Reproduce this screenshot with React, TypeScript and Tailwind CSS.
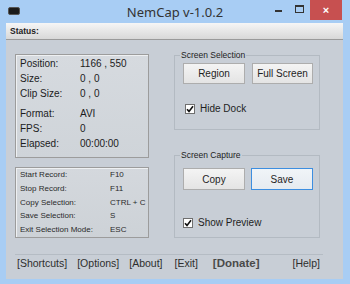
import React from "react";

const shortcuts: [string, string][] = [
  ["Start Record:", "F10"],
  ["Stop Record:", "F11"],
  ["Copy Selection:", "CTRL + C"],
  ["Save Selection:", "S"],
  ["Exit Selection Mode:", "ESC"],
];

function Check({ label }: { label: string }) {
  return (
    <div className="flex items-center gap-[5px]">
      <span className="w-[10px] h-[10px] bg-white border border-[#6f6f6f] flex items-center justify-center">
        <svg width="8" height="8" viewBox="0 0 8 8">
          <path d="M1 4.2 L3 6.4 L7 1.2" fill="none" stroke="#111" strokeWidth="1.6" />
        </svg>
      </span>
      <span className="text-[10px] leading-[12px] text-[#1e1e1e]">{label}</span>
    </div>
  );
}

function Btn({ children, w, h, active }: { children: React.ReactNode; w: string; h: string; active?: boolean }) {
  return (
    <button
      className={
        "flex items-center justify-center text-[10px] text-[#1e1e1e] bg-gradient-to-b border " +
        (active ? "border-[#3d8ee0] from-[#f0f4f8] to-[#e6ebf0] " : "border-[#adadad] from-[#f4f4f4] to-[#e4e4e4] ") +
        w +
        " " +
        h
      }
    >
      {children}
    </button>
  );
}

export default function App() {
  return (
    <div
      className="w-[350px] h-[284px] bg-[#a8cdf4] flex flex-col overflow-hidden"
      style={{ fontFamily: '"Liberation Sans", Arial, sans-serif' }}
    >
      {/* Title bar */}
      <div className="h-[23px] shrink-0 grid grid-cols-[1fr_auto_1fr] items-start">
        <div className="pl-[8px] pt-[7px]">
          <div className="w-[12px] h-[8px] bg-[#1b1b1b] rounded-[2px] border border-[#555]" />
        </div>
        <div
          className="text-[13px] leading-[23px] text-[#333] pt-[1px]"
          style={{ fontFamily: '"Noto Sans", "Open Sans", sans-serif' }}
        >
          NemCap v-1.0.2
        </div>
        <div className="flex justify-end items-start pr-[8px]">
          <div className="w-[7px] h-[2px] bg-[#333] mt-[10px] mr-[13px]" />
          <div className="w-[9px] h-[8px] border border-[#333] border-t-2 mt-[5px] mr-[6px]" />
          <div className="w-[32px] h-[20px] bg-[#c75050] flex items-center justify-center text-white text-[11px] font-bold leading-none">
            ×
          </div>
        </div>
      </div>

      {/* Client area */}
      <div className="ml-[6px] mr-[7px] h-[256px] flex flex-col bg-[#c8ced6]">
        {/* Status bar */}
        <div className="h-[17px] shrink-0 bg-gradient-to-b from-[#f6f6f6] to-[#d8d8d8] border-b border-[#9a9a9a] pl-[4px] flex items-center">
          <span className="text-[8.5px] font-bold text-[#222]">Status:</span>
        </div>

        {/* Main */}
        <div className="flex items-start">
          {/* Left column */}
          <div className="ml-[9px] mt-[14px] w-[134px] flex flex-col gap-[9px]">
            <div className="h-[104px] border border-[#9c9c9c] bg-gradient-to-b from-[#d6dadf] to-[#cfd4d9] shadow-[inset_1px_1px_0_#eef0f2] pl-[4px] pt-[1px] text-[10px] leading-[15px] text-[#1c1c1c]">
              {[
                ["Position:", "1166 , 550"],
                ["Size:", "0 , 0"],
                ["Clip Size:", "0 , 0"],
              ].map(([a, b]) => (
                <div key={a} className="flex">
                  <span className="w-[60px]">{a}</span>
                  <span>{b}</span>
                </div>
              ))}
              <div className="h-[5px]" />
              {[
                ["Format:", "AVI"],
                ["FPS:", "0"],
                ["Elapsed:", "00:00:00"],
              ].map(([a, b]) => (
                <div key={a} className="flex">
                  <span className="w-[60px]">{a}</span>
                  <span>{b}</span>
                </div>
              ))}
            </div>

            <div className="h-[71px] border border-[#9c9c9c] bg-gradient-to-b from-[#d4d8dd] to-[#cdd2d7] shadow-[inset_1px_1px_0_#eef0f2] pl-[4px] text-[8px] leading-[13.8px] text-[#2a2a2a]">
              {shortcuts.map(([a, b]) => (
                <div key={a} className="flex">
                  <span className="w-[90px]">{a}</span>
                  <span>{b}</span>
                </div>
              ))}
            </div>
          </div>

          {/* Right column */}
          <div className="ml-[25px] mt-[15px] w-[146px] flex flex-col gap-[25px]">
            <div className="relative h-[75px] border border-[#b3bac2] pl-[8px] pt-[7px]">
              <span className="absolute -top-[6px] left-[5px] px-[1px] bg-[#c8ced6] text-[8.5px] leading-[10px] text-[#222]">
                Screen Selection
              </span>
              <div className="flex gap-[7px]">
                <Btn w="w-[62px]" h="h-[21px]">Region</Btn>
                <Btn w="w-[61px]" h="h-[21px]">Full Screen</Btn>
              </div>
              <div className="mt-[19px] ml-[2px]">
                <Check label="Hide Dock" />
              </div>
            </div>

            <div className="relative h-[83px] border border-[#b3bac2] pl-[8px] pt-[12px]">
              <span className="absolute -top-[6px] left-[5px] px-[1px] bg-[#c8ced6] text-[8.5px] leading-[10px] text-[#222]">
                Screen Capture
              </span>
              <div className="flex gap-[6px]">
                <Btn w="w-[62px]" h="h-[22px]">Copy</Btn>
                <Btn w="w-[62px]" h="h-[22px]" active>
                  Save
                </Btn>
              </div>
              <div className="mt-[27px]">
                <Check label="Show Preview" />
              </div>
            </div>
          </div>
        </div>

        {/* Footer */}
        <div className="ml-[9px] w-[308px] mt-[16px] border-t border-[#b5bcc4]" />
        <div className="flex items-center h-[18px] ml-[11px] text-[10.5px] text-[#2e2e2e]">
          <span>[Shortcuts]</span>
          <span className="ml-[10px]">[Options]</span>
          <span className="ml-[10px]">[About]</span>
          <span className="ml-[12px]">[Exit]</span>
          <span className="ml-[15px] text-[11.5px] font-bold text-[#4a4a4a]">[Donate]</span>
          <span className="ml-[33px]">[Help]</span>
        </div>
      </div>
    </div>
  );
}
